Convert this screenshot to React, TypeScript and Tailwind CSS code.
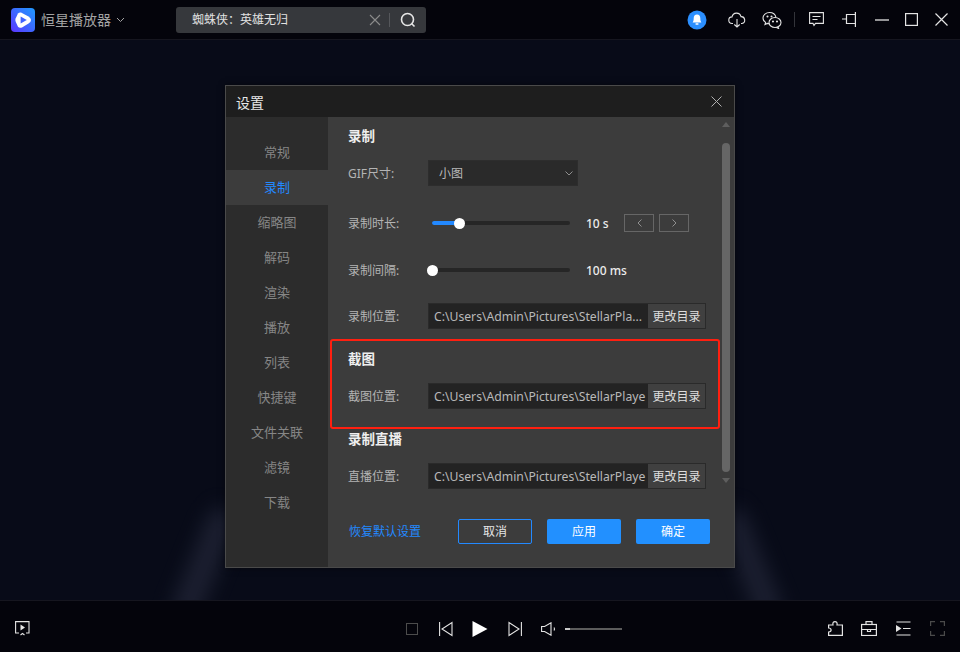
import type { ReactNode } from 'react';

const FONT = "font-['Noto_Sans','Noto_Sans_CJK_SC',sans-serif]";
const NAV = ['常规', '录制', '缩略图', '解码', '渲染', '播放', '列表', '快捷键', '文件关联', '滤镜', '下载'];

function Icon({ size = 16, w, h, children, className = '', stroke = 'currentColor', sw = 1.3 }: { size?: number; w?: number; h?: number; children: ReactNode; className?: string; stroke?: string; sw?: number }) {
  const width = w ?? size;
  const height = h ?? size;
  return (
    <svg width={width} height={height} viewBox={`0 0 ${width} ${height}`} fill="none" stroke={stroke} strokeWidth={sw} className={`shrink-0 ${className}`}>
      {children}
    </svg>
  );
}

function Logo() {
  return (
    <svg width="24" height="24" viewBox="0 0 24 24" className="shrink-0">
      <defs>
        <linearGradient id="lg" x1="1" y1="0" x2="0" y2="1">
          <stop offset="0" stopColor="#1f9bff" />
          <stop offset="1" stopColor="#5b35ff" />
        </linearGradient>
      </defs>
      <rect width="24" height="24" rx="4" fill="url(#lg)" />
      <path d="M7 5.5 Q8 4.4 10 4.6 L17.5 8.5 Q20 10 20 12 Q20 14 17.5 15.5 L11 19.4 Q8.5 20.4 7 18.8 L4.6 13.5 Q4 12 4.6 10.5 Z" fill="#fff" />
      <path d="M9.6 8.4 L15.8 12 L9.6 15.6 Z" fill="#3f63ff" />
    </svg>
  );
}

function TitleBar() {
  return (
    <div className="flex h-10 shrink-0 items-center border-b border-[#16161f] bg-[#04040b]">
      <div className="ml-[11px] flex items-center">
        <Logo />
        <span className="ml-[6px] text-[14px] text-[#a3a3a3]">恒星播放器</span>
        <Icon w={9} h={6} className="ml-[5px] text-[#a3a3a3]" sw={1}><path d="M1 1l3.5 3.5L8 1" /></Icon>
      </div>
      <div className="ml-[51px] flex h-[26px] w-[250px] items-center rounded-[3px] bg-[#36383c] pl-4">
        <span className="text-[12px] text-[#e2e2e2]">蜘蛛侠：英雄无归</span>
        <Icon size={12} className="ml-[81px] text-[#8c8c8c]" sw={1.1}><path d="M1 1l10 10M11 1L1 11" /></Icon>
        <div className="ml-2 h-[14px] w-px bg-[#55575b]" />
        <Icon size={16} className="ml-[10px] text-[#e6e6e6]" sw={1.6}><circle cx="7.5" cy="7.5" r="6" /><path d="M11.5 11.5l3 3" /></Icon>
      </div>
      <div className="ml-[261px] flex items-center text-[#e4e4e4]">
        <svg width="20" height="20" viewBox="0 0 20 20" className="shrink-0">
          <circle cx="10" cy="10" r="9.5" fill="#2b8fff" />
          <path d="M10 4.6c-2.2 0-3.3 1.6-3.3 3.6 0 2.2-.4 3.3-1.1 4.2h8.8c-.7-.9-1.1-2-1.1-4.2 0-2-1.1-3.6-3.3-3.6z" fill="#fff" />
          <rect x="8.4" y="13.2" width="3.2" height="1.5" rx=".7" fill="#fff" />
        </svg>
        <Icon w={18} h={16} className="ml-[21px]" sw={1.1}>
          <path d="M5 11.5H4.2A3.3 3.3 0 0 1 4 4.9 4.6 4.6 0 0 1 13 4.6a3.5 3.5 0 0 1 1 6.9h-1" />
          <path d="M9 7v8M6.3 12.5L9 15l2.7-2.5" />
        </Icon>
        <Icon w={20} h={18} className="ml-[16px]" sw={1.1}>
          <path d="M14 6.5C13.4 3.6 10.8 1.5 7.5 1.5 3.900 1.500 1 4 1 7c0 1.800 1 3.400 2.600 4.400L3 13.500l2.300-1.100c.8.200 1.500.3 2.200.3" />
          <ellipse cx="13" cy="11.500" rx="6" ry="5" />
          <path d="M16 16l.6 1.500-2.100-1" />
          <circle cx="11" cy="10.500" r=".5" fill="currentColor" />
          <circle cx="15" cy="10.500" r=".5" fill="currentColor" />
          <circle cx="5.500" cy="5.500" r=".5" fill="currentColor" />
          <circle cx="9.500" cy="5.500" r=".5" fill="currentColor" />
        </Icon>
        <div className="ml-[12px] h-[15px] w-px bg-[#33343a]" />
        <Icon w={15} h={15} className="ml-[14px]" sw={1.1}>
          <path d="M.6.6h13.800v10.800H6.500l-1.500 2-1-2H.6z" />
          <path d="M3.500 4.500h8M3.500 7.500h5" />
        </Icon>
        <Icon w={14} h={15} className="ml-[18px]" sw={1.2}>
          <path d="M13.400 0v15M13.400 2.500H4.500v9h8.900M4.500 7H0" />
        </Icon>
        <Icon w={14} h={2} className="ml-[19px]" sw={1.300}><path d="M0 1h14" /></Icon>
        <Icon w={13} h={13} className="ml-[16px]" sw={1.200}><rect x=".6" y=".6" width="11.800" height="11.800" /></Icon>
        <Icon w={13} h={13} className="ml-[17px]" sw={1.200}><path d="M.5.500l12 12M12.500.500l-12 12" /></Icon>
      </div>
    </div>
  );
}

function SectionTitle({ children, className }: { children: ReactNode; className: string }) {
  return <div className={`h-5 text-[13.500px] leading-5 font-bold text-[#eeeeee] ${className}`}>{children}</div>;
}

function Row({ label, className, children }: { label: string; className: string; children: ReactNode }) {
  return (
    <div className={`flex h-[26px] items-center ${className}`}>
      <span className="w-20 shrink-0 pt-px text-[12px] text-[#b4b4b4]">{label}</span>
      {children}
    </div>
  );
}

function PathField({ path }: { path: string }) {
  return (
    <div className="flex h-[26px] w-[278px] border border-[#2a2a2a] bg-[#232323]">
      <span className="w-[219px] shrink-0 overflow-hidden pl-[5px] text-[12.200px] leading-[26px] whitespace-nowrap text-[#b9b9b9]">{path}</span>
      <button className="flex-1 bg-[#404040] pt-px text-[12px] text-[#dedede]">更改目录</button>
    </div>
  );
}

function Slider({ percent, value, children }: { percent: number; value: string; children?: ReactNode }) {
  return (
    <>
      <div className="relative ml-1 h-[4px] w-[138px] rounded-full bg-[#262626]">
        <div className="h-full rounded-full bg-[#2389ff]" style={{ width: `${percent}%` }} />
        <div className="absolute top-[-3.500px] h-[11px] w-[11px] rounded-full bg-white" style={{ left: `calc(${percent}% - 5.500px)` }} />
      </div>
      <span className="ml-4 w-[38px] pt-px text-[12px] font-medium whitespace-nowrap text-[#ececec]">{value}</span>
      {children}
    </>
  );
}

function StepButton({ dir, className }: { dir: 'l' | 'r'; className?: string }) {
  return (
    <button className={`flex h-[18px] w-[30px] items-center justify-center border border-[#666666] text-[#8f8f8f] ${className ?? ''}`}>
      <Icon w={5} h={8} sw={1}><path d={dir === 'l' ? 'M4.500.500L1 4l3.500 3.500' : 'M.5.500L4 4 .5 7.500'} /></Icon>
    </button>
  );
}

function Settings() {
  return (
    <div className="flex h-[483px] w-[510px] flex-col border border-[#4a4a4a] bg-[#3c3c3c] shadow-[0_0_6px_rgba(0,0,0,0.5)]">
      <div className="flex h-[31px] shrink-0 items-center justify-between bg-[#1e1e1e] pr-3 pl-[10px]">
        <span className="pt-px text-[14px] text-[#e8e8e8]">设置</span>
        <Icon size={11} className="text-[#b0b0b0]" sw={1}><path d="M.5.500l10 10M10.500.500l-10 10" /></Icon>
      </div>
      <div className="flex min-h-0 flex-1">
        <nav className="w-[102px] shrink-0 bg-[#2c2c2c] pt-[18px]">
          {NAV.map((item) => (
            <div key={item} className={`h-[35px] text-center text-[13px] leading-[34px] ${item === '录制' ? 'bg-[#3c3c3c] text-[#2389ff]' : 'text-[#868686]'}`}>
              {item}
            </div>
          ))}
        </nav>
        <div className="relative flex min-w-0 flex-1">
          <div className="w-[394px] shrink-0 pt-[9px] pl-5">
            <SectionTitle className="">录制</SectionTitle>
            <Row label="GIF尺寸:" className="mt-[14px]">
              <div className="flex h-[26px] w-[150px] items-center justify-between border border-[#2d2d2d] bg-[#2a2a2a] pr-[4px] pl-[10px] text-[12px] text-[#b9b9b9]">
                <span className="pt-px">小图</span>
                <Icon w={8} h={5} className="text-[#8f8f8f]" sw={1}><path d="M.5.500L4 4l3.500-3.500" /></Icon>
              </div>
            </Row>
            <Row label="录制时长:" className="mt-[24px]">
              <Slider percent={20} value="10 s">
                <StepButton dir="l" />
                <StepButton dir="r" className="ml-[5px]" />
              </Slider>
            </Row>
            <Row label="录制间隔:" className="mt-[21px]">
              <Slider percent={0} value="100 ms" />
            </Row>
            <Row label="录制位置:" className="mt-5">
              <PathField path="C:\Users\Admin\Pictures\StellarPla..." />
            </Row>
            <SectionTitle className="mt-5">截图</SectionTitle>
            <Row label="截图位置:" className="mt-[14px]">
              <PathField path="C:\Users\Admin\Pictures\StellarPlaye" />
            </Row>
            <SectionTitle className="mt-5">录制直播</SectionTitle>
            <Row label="直播位置:" className="mt-[14px]">
              <PathField path="C:\Users\Admin\Pictures\StellarPlaye" />
            </Row>
            <div className="mt-[30px] flex h-[25px] items-center">
              <span className="ml-px w-[109px] text-[12px] text-[#2389ff]">恢复默认设置</span>
              <button className="h-[25px] w-[74px] rounded-[2px] border border-[#2389ff] text-[12px] text-[#e6e6e6]">取消</button>
              <button className="ml-[15px] h-[25px] w-[74px] rounded-[2px] bg-[#2290ff] text-[12px] text-white">应用</button>
              <button className="ml-[15px] h-[25px] w-[74px] rounded-[2px] bg-[#2290ff] text-[12px] text-white">确定</button>
            </div>
          </div>
          <div className="flex w-2 shrink-0 flex-col items-center pt-[5px]">
            <div className="h-0 w-0 border-x-[4px] border-b-[5px] border-x-transparent border-b-[#5e5e5e]" />
            <div className="mt-[16px] h-[329px] w-2 rounded-full bg-[#666666]" />
            <div className="mt-[6px] h-0 w-0 border-x-[4px] border-t-[5px] border-x-transparent border-t-[#5e5e5e]" />
          </div>
          {/* 标注框 */}
          <div className="pointer-events-none absolute top-[222px] left-[2px] h-[90px] w-[390px] rounded-[3px] border-[2.500px] border-[#ff1f10]" />
        </div>
      </div>
    </div>
  );
}

function BottomBar() {
  return (
    <div className="flex h-[52px] shrink-0 items-center border-t border-[#16161f] bg-[#04040b] pt-[4px] text-[#e4e4e4]">
      <Icon w={15} h={15} className="ml-[15px]" sw={1.100}>
        <path d="M4 12H.6V.6h13.400V12H11" />
        <path d="M5.500 3.500L10 6.500l-4.500 3z" fill="currentColor" stroke="none" />
        <path d="M5.500 14l2-1.500 2 1.500" />
      </Icon>
      <div className="ml-[376px] h-[12px] w-[12px] border border-[#4c4c4c]" />
      <Icon w={14} h={16} className="ml-[21px]" sw={1.100}><path d="M.6 1v14M13 1.500v13L3 8z" /></Icon>
      <svg width="16" height="16" viewBox="0 0 16 16" className="ml-[19px] shrink-0"><path d="M.5 0L15.500 8 .5 16z" fill="#fff" /></svg>
      <Icon w={14} h={16} className="ml-[20px]" sw={1.100}><path d="M13.400 1v14M1 1.500v13L11 8z" /></Icon>
      <Icon w={15} h={14} className="ml-[19px]" sw={1.100}><path d="M.6 4.500h3L10 .8v12.400L3.600 9.500h-3zM13 5.500c.6 1 .6 2 0 3" /></Icon>
      <div className="ml-[9px] h-[2px] w-[57px] bg-[#5c5c5c]"><div className="h-full w-[5px] bg-[#c8c8c8]" /></div>
      <Icon w={15} h={15} className="ml-[206px]" sw={1.200}>
        <path d="M.6 14.400V11c2 0 2.500-1 2.500-2s-.8-2-2.500-2V4H5C4.500 1.500 5.500.6 7 .6s2.500 1 2 3.400h5.400v10.400z" />
      </Icon>
      <Icon w={16} h={15} className="ml-[18px]" sw={1.200}>
        <rect x=".6" y="3.500" width="14.800" height="11" />
        <path d="M5 3.500V.6h6v2.900M.6 8.500h14.800M6.500 8.500v2h3v-2" />
      </Icon>
      <Icon w={15} h={15} className="ml-[19px]" sw={1.200}>
        <path d="M.5 1h14M.5 14h14M7 7.500h7.500" />
        <path d="M0 4l5.500 3.500L0 11z" fill="currentColor" stroke="none" />
      </Icon>
      <Icon w={15} h={15} className="ml-[19px] text-[#4a4a4a]" sw={1.200}>
        <path d="M5 .6H.6V5M10 .6h4.400V5M5 14.400H.6V10M10 14.400h4.400V10" />
      </Icon>
    </div>
  );
}

export default function App() {
  return (
    <div className={`flex h-[652px] w-[960px] flex-col overflow-hidden bg-[#04040b] ${FONT}`}>
      <TitleBar />
      <main className="relative flex min-h-0 flex-1 justify-center overflow-hidden bg-[#080b18] pt-[45px]">
        {/* 背景光束 */}
        <div className="absolute top-[465px] left-[190px] h-[120px] w-[28px] rotate-[22deg] rounded-full bg-[#2a2e42] opacity-60 blur-[10px]" />
        <div className="absolute top-[465px] left-[738px] h-[120px] w-[26px] rotate-[-22deg] rounded-full bg-[#2a2e42] opacity-60 blur-[10px]" />
        <div className="relative">
          <Settings />
        </div>
      </main>
      <BottomBar />
    </div>
  );
}
